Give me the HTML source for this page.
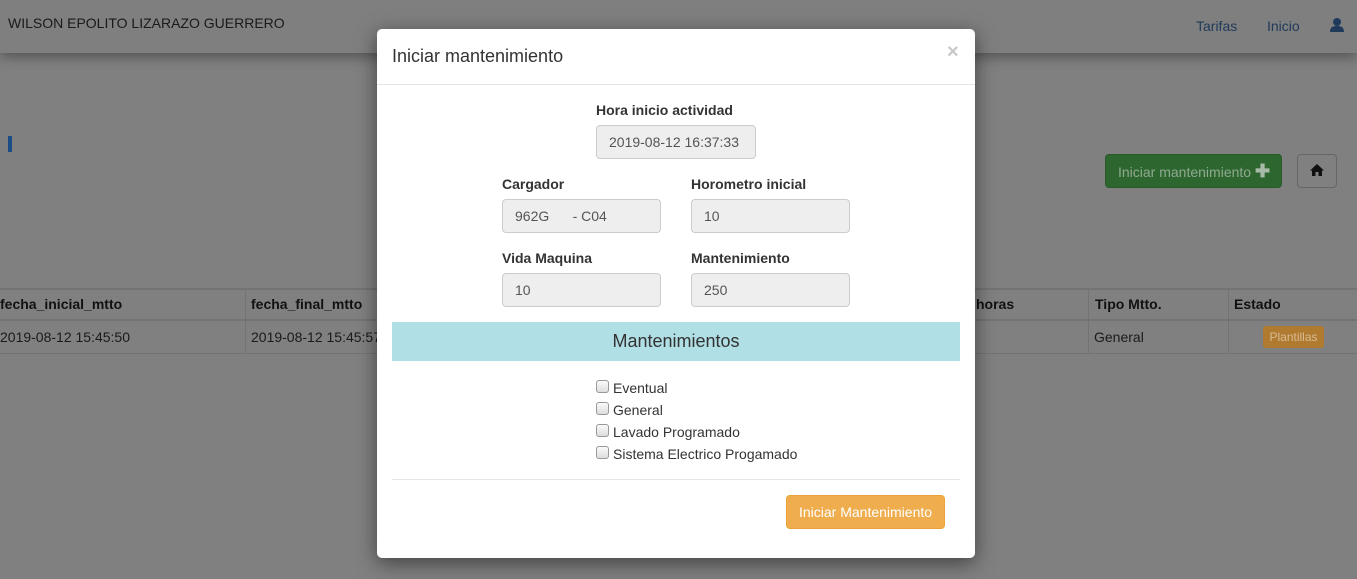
<!DOCTYPE html>
<html><head><meta charset="utf-8"><style>
*{box-sizing:border-box;margin:0;padding:0}
body{width:1357px;height:579px;overflow:hidden;background:#808080;font-family:"Liberation Sans",Arial,sans-serif;font-size:14px;color:#333;position:relative}
.a{position:absolute}
.nav{left:0;top:0;width:1357px;height:53px;background:#7f7f7f;box-shadow:0 4px 12px rgba(0,0,0,.35)}
.th{font-weight:bold;color:#111}
.td{color:#1a1a1a}
.modal{left:377px;top:29px;width:598px;height:529px;background:#fff;border-radius:5px;box-shadow:0 5px 20px rgba(0,0,0,.5)}
.lbl{font-weight:bold;color:#333;font-size:14px}
.inp{background:#eee;border:1px solid #ccc;border-radius:4px;height:34px;padding:0 12px;line-height:32px;color:#555;font-size:14px}
.cb{width:13px;height:13px;border:1px solid #999;border-radius:3px;background:linear-gradient(#fafafa,#ddd)}
</style></head><body>
<div class="a nav"></div>
<div class="a" style="left:8px;top:15px;color:#1a1a1a;font-size:14px">WILSON EPOLITO LIZARAZO GUERRERO</div>
<div class="a" style="left:1196px;top:18px;color:#1f3a5a">Tarifas</div>
<div class="a" style="left:1267px;top:18px;color:#1f3a5a">Inicio</div>
<svg class="a" style="left:1329px;top:17px" width="16" height="16" viewBox="0 0 16 16"><circle cx="8" cy="5" r="4" fill="#1f3a5a"/><path d="M1 15c0-5 3-6 7-6s7 1 7 6z" fill="#1f3a5a"/></svg>
<div class="a" style="left:8px;top:136px;width:4px;height:16px;background:#1d4d86"></div>
<div class="a" style="left:1105px;top:154px;width:177px;height:34px;background:#2e6630;border:1px solid #285a2a;border-radius:4px;color:#8faa8f;line-height:32px;padding-left:12px">Iniciar mantenimiento <b style="font-size:18px;color:#a8bba8">✚</b></div>
<div class="a" style="left:1297px;top:154px;width:40px;height:34px;border:1px solid #666;border-radius:4px"></div>
<svg class="a" style="left:1310px;top:163px" width="14" height="14" viewBox="0 0 14 14"><path d="M7 1L0 7.5h2V13h3.5V9h3v4H12V7.5h2z" fill="#111"/></svg>
<div class="a" style="left:0;top:288px;width:1357px;height:2px;background:#737373"></div>
<div class="a" style="left:0;top:319px;width:1357px;height:2px;background:#737373"></div>
<div class="a" style="left:0;top:353px;width:1357px;height:1px;background:#737373"></div>
<div class="a" style="left:245px;top:289px;width:1px;height:64px;background:#737373"></div>
<div class="a" style="left:1088px;top:289px;width:1px;height:64px;background:#737373"></div>
<div class="a" style="left:1228px;top:289px;width:1px;height:64px;background:#737373"></div>
<div class="a th" style="left:0;top:296px">fecha_inicial_mtto</div>
<div class="a th" style="left:251px;top:296px">fecha_final_mtto</div>
<div class="a th" style="left:976px;top:296px">horas</div>
<div class="a th" style="left:1095px;top:296px">Tipo Mtto.</div>
<div class="a th" style="left:1234px;top:296px">Estado</div>
<div class="a td" style="left:0;top:329px">2019-08-12 15:45:50</div>
<div class="a td" style="left:251px;top:329px">2019-08-12 15:45:57</div>
<div class="a td" style="left:1094px;top:329px">General</div>
<div class="a" style="left:1263px;top:326px;width:61px;height:22px;background:#b07a30;border-radius:3px;color:#d8bc94;font-size:12px;text-align:center;line-height:22px">Plantillas</div>

<div class="a modal">
<div class="a" style="left:15px;top:17px;font-size:18px;color:#333">Iniciar mantenimiento</div>
<div class="a" style="left:570px;top:12px;font-size:20px;font-weight:bold;color:#c8c8c8">×</div>
<div class="a" style="left:0;top:55px;width:598px;height:1px;background:#e5e5e5"></div>
<div class="a lbl" style="left:219px;top:73px">Hora inicio actividad</div>
<div class="a inp" style="left:219px;top:96px;width:160px">2019-08-12 16:37:33</div>
<div class="a lbl" style="left:125px;top:147px">Cargador</div>
<div class="a lbl" style="left:314px;top:147px">Horometro inicial</div>
<div class="a inp" style="left:125px;top:170px;width:159px;white-space:pre">962G      - C04</div>
<div class="a inp" style="left:314px;top:170px;width:159px">10</div>
<div class="a lbl" style="left:125px;top:221px">Vida Maquina</div>
<div class="a lbl" style="left:314px;top:221px">Mantenimiento</div>
<div class="a inp" style="left:125px;top:244px;width:159px">10</div>
<div class="a inp" style="left:314px;top:244px;width:159px">250</div>
<div class="a" style="left:15px;top:293px;width:568px;height:39px;background:#b0dfe5;text-align:center;line-height:39px;font-size:18px;color:#333">Mantenimientos</div>
<div class="a cb" style="left:219px;top:351px"></div><div class="a" style="left:236px;top:351px">Eventual</div>
<div class="a cb" style="left:219px;top:373px"></div><div class="a" style="left:236px;top:373px">General</div>
<div class="a cb" style="left:219px;top:395px"></div><div class="a" style="left:236px;top:395px">Lavado Programado</div>
<div class="a cb" style="left:219px;top:417px"></div><div class="a" style="left:236px;top:417px">Sistema Electrico Progamado</div>
<div class="a" style="left:15px;top:450px;width:568px;height:1px;background:#e5e5e5"></div>
<div class="a" style="left:409px;top:466px;width:159px;height:34px;background:#f0ad4e;border:1px solid #eea236;border-radius:4px;color:#fff;text-align:center;line-height:32px">Iniciar Mantenimiento</div>
</div>
</body></html>
